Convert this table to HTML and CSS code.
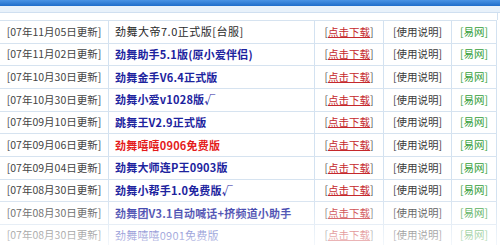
FILE: index.html
```html
<!DOCTYPE html>
<html lang="zh-CN">
<head>
<meta charset="utf-8">
<title>劲舞团外挂下载</title>
<link rel="stylesheet" href="styles.css">
</head>
<body>
<div class="page">
  <div class="topbar"></div>
  <div class="substrip"></div>
  <div class="gap"></div>
  <div class="list">
    <div class="row"><div class="c date">[07年11月05日更新]</div><div class="c name plain">劲舞大帝7.0正式版[台服]</div><div class="c dl">[<a href="#">点击下载</a>]</div><div class="c help">[使用说明]</div><div class="c src">[易网]</div></div>
    <div class="row"><div class="c date">[07年11月02日更新]</div><div class="c name blue">劲舞助手5.1版(原小爱伴侣)</div><div class="c dl">[<a href="#">点击下载</a>]</div><div class="c help">[使用说明]</div><div class="c src">[易网]</div></div>
    <div class="row"><div class="c date">[07年10月30日更新]</div><div class="c name blue">劲舞金手V6.4正式版</div><div class="c dl">[<a href="#">点击下载</a>]</div><div class="c help">[使用说明]</div><div class="c src">[易网]</div></div>
    <div class="row"><div class="c date">[07年10月30日更新]</div><div class="c name blue">劲舞小爱v1028版√</div><div class="c dl">[<a href="#">点击下载</a>]</div><div class="c help">[使用说明]</div><div class="c src">[易网]</div></div>
    <div class="row"><div class="c date">[07年09月10日更新]</div><div class="c name blue">跳舞王V2.9正式版</div><div class="c dl">[<a href="#">点击下载</a>]</div><div class="c help">[使用说明]</div><div class="c src">[易网]</div></div>
    <div class="row"><div class="c date">[07年09月06日更新]</div><div class="c name red">劲舞嘻嘻0906免费版</div><div class="c dl">[<a href="#">点击下载</a>]</div><div class="c help">[使用说明]</div><div class="c src">[易网]</div></div>
    <div class="row"><div class="c date">[07年09月04日更新]</div><div class="c name blue">劲舞大师连P王0903版</div><div class="c dl">[<a href="#">点击下载</a>]</div><div class="c help">[使用说明]</div><div class="c src">[易网]</div></div>
    <div class="row"><div class="c date">[07年08月30日更新]</div><div class="c name blue">劲舞小帮手1.0免费版√</div><div class="c dl">[<a href="#">点击下载</a>]</div><div class="c help">[使用说明]</div><div class="c src">[易网]</div></div>
    <div class="row"><div class="c date">[07年08月30日更新]</div><div class="c name blue">劲舞团V3.1自动喊话+挤频道小助手</div><div class="c dl">[<a href="#">点击下载</a>]</div><div class="c help">[使用说明]</div><div class="c src">[易网]</div></div>
    <div class="row"><div class="c date">[07年08月30日更新]</div><div class="c name bluethin">劲舞嘻嘻0901免费版</div><div class="c dl">[<a href="#">点击下载</a>]</div><div class="c help">[使用说明]</div><div class="c src">[易网]</div></div>
  </div>
  <div class="fade"></div>
</div>
</body>
</html>
```
FILE: styles.css
```css
html, body {
  margin: 0;
  padding: 0;
  background: #fff;
}
.page {
  position: relative;
  width: 500px;
  height: 245px;
  overflow: hidden;
  font-family: "Noto Sans CJK SC", "Noto Sans", sans-serif;
  font-size: 10.5px;
  color: #333;
}
.topbar {
  height: 6px;
  background: linear-gradient(#4a93e4, #1f6dca);
}
.substrip {
  height: 6px;
  background: #e8f1fa;
  border-bottom: 1px solid #cfdff0;
}
.gap {
  height: 7px;
  border-right: 1px solid #d3e2f1;
  width: 497px;
}
.list {
  width: 497px;
}
.row {
  display: grid;
  grid-template-columns: 109px 206px 69px 68px 45px;
  height: 22.67px;
  box-sizing: border-box;
  border-top: 1px solid #d6e3f0;
  align-items: center;
}
.c {
  height: 100%;
  display: flex;
  align-items: center;
  border-right: 1px solid #d3e2f1;
  white-space: nowrap;
  overflow: hidden;
  line-height: 1;
}
.date {
  justify-content: center;
  color: #444;
}
.name {
  padding-left: 6px;
  font-size: 11px;
  letter-spacing: 0.2px;
}
.plain {
  color: #2b2b2b;
  letter-spacing: 0.5px;
}
.blue {
  color: #1c239e;
  font-weight: bold;
}
.bluethin {
  color: #2a36b0;
}
.red {
  color: #e41b1b;
  font-weight: bold;
}
.dl, .help, .src {
  justify-content: center;
}
.dl {
  color: #555;
}
.dl a {
  color: #c5282c;
  text-decoration: underline;
}
.help {
  color: #3a3a3a;
}
.src {
  color: #35a03a;
}
.fade {
  position: absolute;
  left: 0;
  right: 0;
  bottom: 0;
  height: 50px;
  background: linear-gradient(rgba(255,255,255,0), rgba(255,255,255,0.3) 45%, rgba(255,255,255,0.72));
  pointer-events: none;
}
```
